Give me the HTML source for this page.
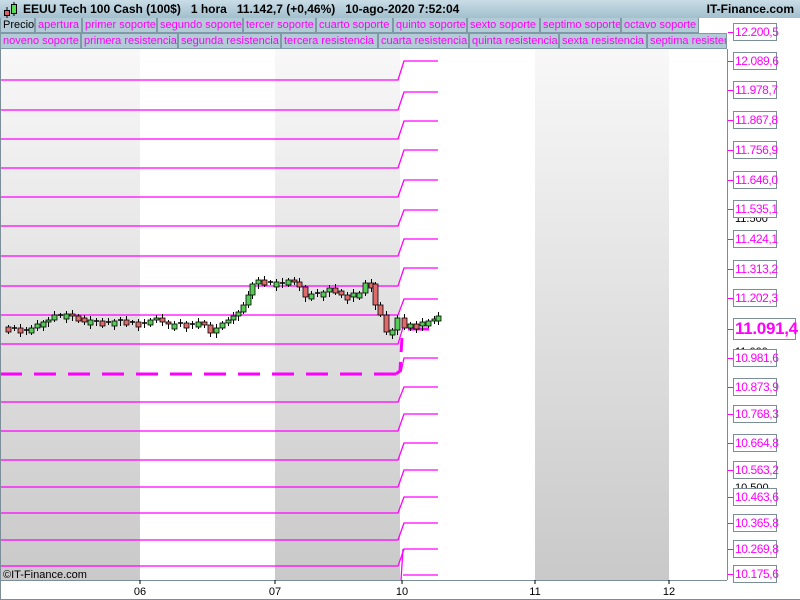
<!DOCTYPE html>
<html><head><meta charset="utf-8"><style>
*{margin:0;padding:0;box-sizing:border-box}
body{width:800px;height:600px;overflow:hidden;background:#fff;font-family:"Liberation Sans",sans-serif;position:relative}
#hdr{position:absolute;left:0;top:0;width:800px;height:18px;background:linear-gradient(#c9dde7,#a2bfcd);font-size:12px;font-weight:bold;color:#000;line-height:18px}
.leg{position:absolute;height:15px;background:#b3cbd6;border:1px solid #7f9aa6;border-top:none;font-size:11px;line-height:14px;color:#f0f;padding-left:2px;white-space:nowrap;overflow:hidden}
.lab{position:absolute;left:733px;width:44px;height:18px;border:1px solid #7b8d96;background:#fff;color:#f0f;font-size:12px;line-height:16px;padding-left:1px;letter-spacing:-0.4px;white-space:nowrap}
</style></head><body>
<div id="hdr">
<svg style="position:absolute;left:2px;top:2px" width="16" height="16"><line x1="5" y1="5" x2="5" y2="16" stroke="#000"/><rect x="2.5" y="8.5" width="5" height="5" fill="#e06060" stroke="#000"/><line x1="12" y1="0" x2="12" y2="14" stroke="#000"/><rect x="9.5" y="2.5" width="5" height="9" fill="#5d5" stroke="#000"/></svg>
<span style="position:absolute;left:23px">EEUU Tech 100 Cash (100$)&nbsp;&nbsp;&nbsp;1 hora&nbsp;&nbsp;&nbsp;11.142,7 (+0,46%)&nbsp;&nbsp;&nbsp;10-ago-2020 7:52:04</span>
<span style="position:absolute;right:6px">IT-Finance.com</span>
</div>
<div class="leg" style="top:18px;left:0;width:35px;color:#000;border-left:1px solid #7f9aa6">Precio</div>
<div class="leg" style="top:18px;left:35px;width:47px">apertura</div>
<div class="leg" style="top:18px;left:82px;width:75px">primer soporte</div>
<div class="leg" style="top:18px;left:157px;width:86px">segundo soporte</div>
<div class="leg" style="top:18px;left:243px;width:73px">tercer soporte</div>
<div class="leg" style="top:18px;left:316px;width:77px">cuarto soporte</div>
<div class="leg" style="top:18px;left:393px;width:74px">quinto soporte</div>
<div class="leg" style="top:18px;left:467px;width:73px">sexto soporte</div>
<div class="leg" style="top:18px;left:540px;width:81px">septimo soporte</div>
<div class="leg" style="top:18px;left:621px;width:78px">octavo soporte</div>
<div class="leg" style="top:33px;left:0;width:81px;border-top:1px solid #7f9aa6;height:16px">noveno soporte</div>
<div class="leg" style="top:33px;left:81px;width:97px;border-top:1px solid #7f9aa6;height:16px">primera resistencia</div>
<div class="leg" style="top:33px;left:178px;width:103px;border-top:1px solid #7f9aa6;height:16px">segunda resistencia</div>
<div class="leg" style="top:33px;left:281px;width:97px;border-top:1px solid #7f9aa6;height:16px">tercera resistencia</div>
<div class="leg" style="top:33px;left:378px;width:91px;border-top:1px solid #7f9aa6;height:16px">cuarta resistencia</div>
<div class="leg" style="top:33px;left:469px;width:90px;border-top:1px solid #7f9aa6;height:16px">quinta resistencia</div>
<div class="leg" style="top:33px;left:559px;width:88px;border-top:1px solid #7f9aa6;height:16px">sexta resistencia</div>
<div class="leg" style="top:33px;left:647px;width:80px;border-top:1px solid #7f9aa6;height:16px">septima resisten</div>

<svg id="ch" style="position:absolute;left:0;top:49px" width="800" height="551">
<defs><linearGradient id="g" x1="0" y1="0" x2="0" y2="1"><stop offset="0" stop-color="#f8f8f8"/><stop offset="1" stop-color="#c9c9c9"/></linearGradient></defs>
<rect x="0" y="0" width="140" height="531" fill="url(#g)"/>
<rect x="275" y="0" width="125" height="531" fill="url(#g)"/>
<rect x="535" y="0" width="134" height="531" fill="url(#g)"/>
<g id="lines"></g>
<g id="cd"></g>
<line x1="727.5" y1="0" x2="727.5" y2="531" stroke="#7b8d96"/>
<line x1="0" y1="531.5" x2="727" y2="531.5" stroke="#7b8d96"/>
<line x1="0" y1="550.5" x2="800" y2="550.5" stroke="#7b8d96"/>
<line x1="0.5" y1="0" x2="0.5" y2="551" stroke="#7b8d96"/>
<g stroke="#000"><line x1="140" y1="531" x2="140" y2="535"/><line x1="275" y1="531" x2="275" y2="535"/><line x1="402" y1="531" x2="402" y2="535"/><line x1="535" y1="531" x2="535" y2="535"/><line x1="669" y1="531" x2="669" y2="535"/></g>
<g font-size="11" fill="#000" text-anchor="middle"><text x="140" y="546">06</text><text x="275" y="546">07</text><text x="402" y="546">10</text><text x="535" y="546">11</text><text x="669" y="546">12</text></g>
<text x="3" y="529" font-size="11" fill="#000">©IT-Finance.com</text>
<g font-size="11" fill="#000"><text x="735" y="173">11.500</text><text x="735" y="442">10.500</text><text x="735" y="306">11.000</text><text x="735" y="40">12.000</text></g>
</svg>
<div id="labs"></div>
<script>
var L=[80,110,139,168,197,226,256,286,315,344,374,402,431,460,487,513,540,566];
var RS=[61,92,121,150,180,210,239,268,299,329,358,387,414,443,470,497,523,549];
var R=[32,61,90,120,150,180,209,239,269,298,329,358,387,414,443,470,497,523,549,574];
var s='';
for(var i=0;i<L.length;i++){var l=L[i]-49,r=RS[i]-49;
 if(i==10){s+='<line x1="0" y1="'+l+'" x2="396" y2="'+l+'" stroke="#f0f" stroke-width="3" stroke-dasharray="22,12"/><polyline points="396,'+l+' 400,'+(l-3)+' 402,'+(l-37)+'" fill="none" stroke="#f0f" stroke-width="3" stroke-dasharray="14,10"/><polyline points="401,'+(l-2)+' 404,'+r+' 438,'+r+'" fill="none" stroke="#f0f" stroke-width="1.3"/>';}
 else if(i==9){s+='<polyline points="0,'+l+' 398,'+l+' 404,'+(l-20)+'" fill="none" stroke="#f0f" stroke-width="1.3"/><line x1="408" y1="'+r+'" x2="429" y2="'+r+'" stroke="#f0f" stroke-width="3"/>';}
 else s+='<polyline points="0,'+l+' 398,'+l+' 404,'+r+' 438,'+r+'" fill="none" stroke="#f0f" stroke-width="1.3"/>';}
s+='<line x1="403" y1="'+(575-49)+'" x2="438" y2="'+(575-49)+'" stroke="#f0f" stroke-width="1.3"/>';
s+='<line x1="401" y1="531" x2="403" y2="'+(549-49)+'" stroke="#f0f" stroke-width="1.3"/>';
document.getElementById('lines').innerHTML=s;
var P=[[8,328],[14,328],[20,329],[26,330],[31,328],[37,324],[43,322],[48,320],[54,315],[60,315],[66,314],[72,316],[78,318],[84,322],[90,320],[96,321],[102,322],[108,322],[114,321],[120,320],[126,322],[132,322],[138,323],[144,323],[150,320],[156,318],[162,322],[168,324],[174,324],[180,323],[186,324],[192,324],[198,322],[204,325],[210,333],[216,328],[222,323],[228,320],[233,316],[238,312],[243,305],[248,295],[252,284],[258,280],[264,282],[270,282],[276,282],[282,283],[288,280],[294,282],[299,287],[305,297],[311,294],[317,293],[323,292],[329,288],[335,291],[341,295],[347,297],[353,293],[359,293],[365,283],[371,284],[375,305],[380,315],[386,332],[392,330],[397,318],[404,328],[410,324],[416,326],[422,322],[428,321],[434,319],[438,316]];
var c='',prev=327;
for(var j=0;j<P.length;j++){var x=P[j][0],y=P[j][1]-49,o=prev-49;var t=Math.min(o,y),b=Math.max(o,y);
 if(b-t<4&&j%2==0){b=t+5;}
 var hi=t-2-(j%3),lo=b+2+(j%4);
 c+='<line x1="'+(x+.5)+'" y1="'+hi+'" x2="'+(x+.5)+'" y2="'+lo+'" stroke="#000"/>';
 if(b-t<1.5)c+='<line x1="'+(x-2)+'" y1="'+y+'" x2="'+(x+3)+'" y2="'+y+'" stroke="#000" stroke-width="1.5"/>';
 else c+='<rect x="'+(x-2)+'" y="'+t+'" width="5" height="'+(b-t)+'" fill="'+(y<=o?'#5c5':'#e06a6a')+'" stroke="#000" stroke-width="0.8"/>';
 prev=P[j][1];}
document.getElementById('cd').innerHTML=c;
var V=['12.200,5','12.089,6','11.978,7','11.867,8','11.756,9','11.646,0','11.535,1','11.424,1','11.313,2','11.202,3','11.091,4','10.981,6','10.873,9','10.768,3','10.664,8','10.563,2','10.463,6','10.365,8','10.269,8','10.175,6'];
var h='';
for(var k=0;k<V.length;k++){var y=R[k];
 if(k==10)h+='<div class="lab" style="top:'+(y-11)+'px;height:22px;width:63px;font-size:17px;font-weight:bold;line-height:20px;letter-spacing:-0.3px">'+V[k]+'</div>';
 else h+='<div class="lab" style="top:'+(y-9)+'px">'+V[k]+'</div>';
 h+='<div style="position:absolute;left:728px;top:'+y+'px;width:5px;height:1px;background:#f0f"></div>';}
document.getElementById('labs').innerHTML=h;
</script>
</body></html>
